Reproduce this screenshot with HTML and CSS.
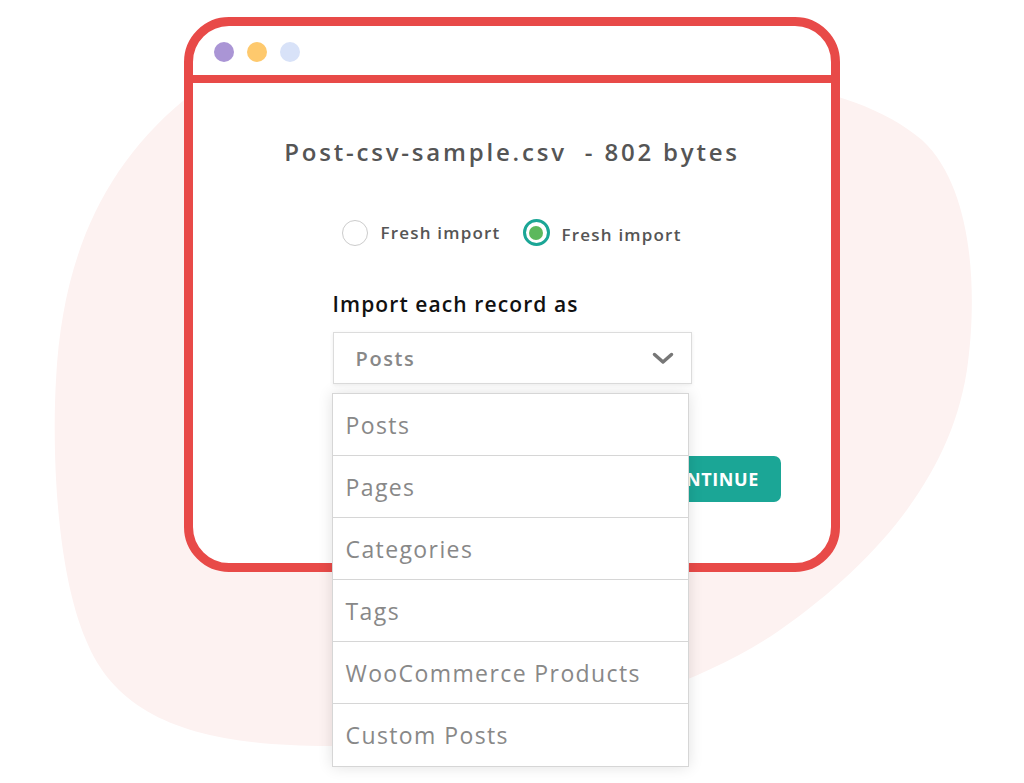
FILE: index.html
```html
<!DOCTYPE html>
<html lang="en">
<head>
    <meta charset="UTF-8">
    <meta name="viewport" content="width=device-width, initial-scale=1.0">
    <title>Import CSV</title>
    <link rel="stylesheet" href="styles.css">
</head>
<body>
    <svg class="blob" width="1024" height="783" viewBox="0 0 1024 783" aria-hidden="true">
        <path d="M500 70 C700 64 850 78 922 140 C976 190 976 300 968 362 C955 470 880 560 780 630 C680 700 500 746 330 746 C200 746 118 720 86 640 C56 570 52 450 56 380 C62 262 100 170 184 100 C260 76 380 72 500 70 Z"/>
    </svg>

    <div class="page">
        <div class="window">
            <div class="window-bar">
                <span class="dot dot-purple"></span>
                <span class="dot dot-yellow"></span>
                <span class="dot dot-blue"></span>
            </div>

            <div class="window-body">
                <h2 class="file-name">Post-csv-sample.csv&nbsp; - 802 bytes</h2>

                <div class="radio-row">
                    <label class="radio">
                        <span class="radio-circle"></span>
                        <span class="radio-label">Fresh import</span>
                    </label>
                    <label class="radio checked">
                        <span class="radio-circle"></span>
                        <span class="radio-label">Fresh import</span>
                    </label>
                </div>

                <div class="form-col">
                    <div class="field-label">Import each record as</div>
                    <div class="select">
                        <div class="select-box">
                            <span class="select-value">Posts</span>
                            <svg class="chevron" width="22" height="13" viewBox="0 0 22 13">
                                <polyline points="2.5,2.5 11,10 19.5,2.5"/>
                            </svg>
                        </div>
                        <ul class="select-menu">
                            <li>Posts</li>
                            <li>Pages</li>
                            <li>Categories</li>
                            <li>Tags</li>
                            <li>WooCommerce Products</li>
                            <li>Custom Posts</li>
                        </ul>
                    </div>
                </div>

                <div class="actions">
                    <button class="continue-btn">CONTINUE</button>
                </div>
            </div>
        </div>
    </div>
</body>
</html>
```

FILE: styles.css
```css
:root {
    --frame-red: #e84a48;
    --teal: #1ba696;
    --text-dark: #555555;
    --text-muted: #888888;
    --line: #d6d6d6;
    --blob: #fdf2f1;
}

* {
    box-sizing: border-box;
    margin: 0;
    padding: 0;
}

body {
    font-family: "Open Sans", "Noto Sans", Arial, sans-serif;
    background-color: #ffffff;
    position: relative;
    min-height: 783px;
    overflow: hidden;
}

.blob {
    position: absolute;
    top: 0;
    left: 0;
    z-index: 0;
}

.blob path {
    fill: var(--blob);
}

.page {
    position: relative;
    z-index: 1;
    padding-top: 17px;
}

.window {
    width: 656px;
    height: 555px;
    margin: 0 auto;
    border: 9px solid var(--frame-red);
    border-radius: 45px;
    background-color: #fff;
    display: flex;
    flex-direction: column;
}

.window-bar {
    height: 57px;
    border-bottom: 8px solid var(--frame-red);
    display: flex;
    align-items: center;
    gap: 13px;
    padding-left: 21px;
    padding-top: 3px;
}

.dot {
    width: 20px;
    height: 20px;
    border-radius: 50%;
}

.dot-purple { background-color: #aa95d5; }
.dot-yellow { background-color: #fec96d; }
.dot-blue { background-color: #d8e2f8; }

.window-body {
    flex: 1;
    display: flex;
    flex-direction: column;
    align-items: center;
    padding-top: 52px;
}

.file-name {
    font-size: 24px;
    font-weight: 600;
    line-height: 34px;
    color: var(--text-dark);
    letter-spacing: 2.8px;
    white-space: pre;
}

.radio-row {
    display: flex;
    align-items: center;
    gap: 22px;
    margin-top: 50px;
}

.radio {
    display: flex;
    align-items: center;
    gap: 12px;
}

.radio-circle {
    width: 26px;
    height: 26px;
    border-radius: 50%;
    border: 1.5px solid #cccccc;
    display: flex;
    align-items: center;
    justify-content: center;
}

.radio.checked .radio-circle {
    width: 27px;
    height: 27px;
    border: 3px solid var(--teal);
}

.radio.checked .radio-circle::after {
    content: "";
    width: 14px;
    height: 14px;
    border-radius: 50%;
    background-color: #5cb85c;
}

.radio-label {
    font-size: 17px;
    font-weight: 600;
    color: var(--text-dark);
    letter-spacing: 1.2px;
}

.radio.checked .radio-label {
    margin-top: 3px;
}

.form-col {
    width: 359px;
    margin-top: 43px;
}

.field-label {
    font-size: 21px;
    font-weight: 600;
    line-height: 30px;
    color: #111;
    letter-spacing: 1.1px;
}

.select {
    position: relative;
    margin-top: 13px;
}

.select-box {
    height: 52px;
    border: 1px solid #dcdcdc;
    box-shadow: 0 1px 4px rgba(0, 0, 0, 0.08);
    display: flex;
    align-items: center;
    justify-content: space-between;
    padding: 0 17px 0 22px;
    background-color: #fff;
}

.select-value {
    font-size: 20px;
    font-weight: 600;
    color: var(--text-muted);
    letter-spacing: 1.6px;
}

.chevron polyline {
    fill: none;
    stroke: #777;
    stroke-width: 3.5;
    stroke-linecap: round;
    stroke-linejoin: round;
}

.select-menu {
    position: absolute;
    top: 61px;
    left: -1px;
    width: 357px;
    list-style: none;
    background-color: #fff;
    border: 1px solid var(--line);
    box-shadow: 0 0 14px rgba(0, 0, 0, 0.12);
    z-index: 5;
}

.select-menu li {
    height: 62px;
    display: flex;
    align-items: center;
    padding-left: 13px;
    font-size: 23px;
    color: var(--text-muted);
    letter-spacing: 1.4px;
    border-bottom: 1.5px solid var(--line);
}

.select-menu li:last-child {
    border-bottom: none;
}

.actions {
    align-self: stretch;
    display: flex;
    justify-content: flex-end;
    padding-right: 50px;
    margin-top: 72px;
}

.continue-btn {
    height: 46px;
    padding: 0 22px;
    border: none;
    border-radius: 7px;
    background-color: var(--teal);
    color: #fff;
    font-family: inherit;
    font-size: 18px;
    font-weight: 700;
    letter-spacing: 0.6px;
}
```
